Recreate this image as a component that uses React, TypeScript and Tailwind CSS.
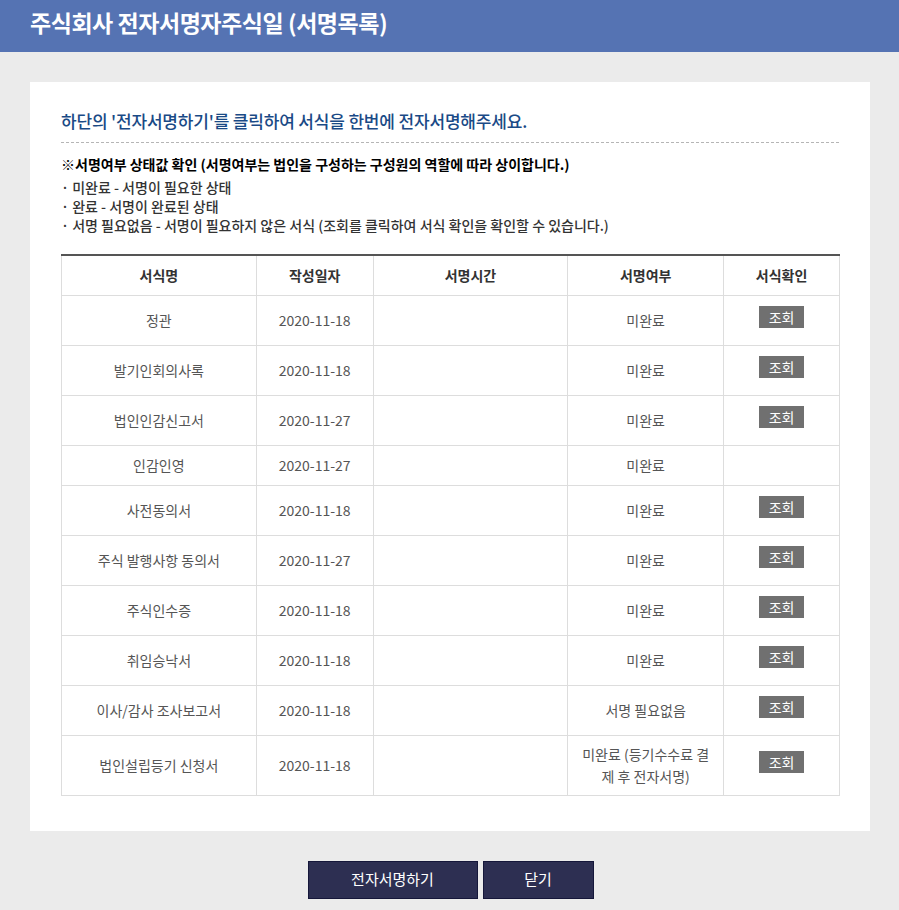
const rows = [
    { name: "정관", date: "2020-11-18", status: "미완료", view: true },
    { name: "발기인회의사록", date: "2020-11-18", status: "미완료", view: true },
    { name: "법인인감신고서", date: "2020-11-27", status: "미완료", view: true },
    { name: "인감인영", date: "2020-11-27", status: "미완료", view: false },
    { name: "사전동의서", date: "2020-11-18", status: "미완료", view: true },
    { name: "주식 발행사항 동의서", date: "2020-11-27", status: "미완료", view: true },
    { name: "주식인수증", date: "2020-11-18", status: "미완료", view: true },
    { name: "취임승낙서", date: "2020-11-18", status: "미완료", view: true },
    { name: "이사/감사 조사보고서", date: "2020-11-18", status: "서명 필요없음", view: true },
    { name: "법인설립등기 신청서", date: "2020-11-18", status: "미완료 (등기수수료 결제 후 전자서명)", view: true },
];

export default function App() {
    return (
        <div
            className="min-h-[910px] bg-[#ebebeb]"
            style={{ fontFamily: '"Noto Sans CJK KR", "Noto Sans", sans-serif' }}
        >
            <header className="h-[52px] bg-[#5573b3] pl-[30px] flex items-center">
                <h1 className="text-[23px] font-bold text-white tracking-[-0.02em] leading-none pb-[8px]">
                    주식회사 전자서명자주식일 (서명목록)
                </h1>
            </header>

            <div className="mx-[30px] mt-[30px] bg-white px-[31px] pt-[26px] pb-[35px] w-[840px]">
                <h2 className="text-[17px] font-medium text-[#1a4a86] tracking-[-0.01em] leading-[26px] pb-[8px] border-b border-dashed border-[#b5b5b5]">
                    하단의 '전자서명하기'를 클릭하여 서식을 한번에 전자서명해주세요.
                </h2>

                <p className="mt-[10px] text-[14px] font-bold text-black leading-[22px]">
                    ※서명여부 상태값 확인 (서명여부는 법인을 구성하는 구성원의 역할에 따라 상이합니다.)
                </p>
                <ul className="mt-[3px] text-[14px] text-[#333] font-medium leading-[19px]">
                    <li>· 미완료 - 서명이 필요한 상태</li>
                    <li>· 완료 - 서명이 완료된 상태</li>
                    <li>· 서명 필요없음 - 서명이 필요하지 않은 서식 (조회를 클릭하여 서식 확인을 확인할 수 있습니다.)</li>
                </ul>

                <table className="mt-[19px] w-[779px] border-collapse border-t-2 border-t-[#555] text-[14px] text-center">
                    <thead>
                        <tr className="h-[40px] text-[#333] font-bold">
                            <th className="w-[195px] border border-[#ddd] border-t-0 font-bold">서식명</th>
                            <th className="w-[117px] border border-[#ddd] border-t-0 font-bold">작성일자</th>
                            <th className="w-[195px] border border-[#ddd] border-t-0 font-bold">서명시간</th>
                            <th className="w-[156px] border border-[#ddd] border-t-0 font-bold">서명여부</th>
                            <th className="w-[116px] border border-[#ddd] border-t-0 font-bold">서식확인</th>
                        </tr>
                    </thead>
                    <tbody className="text-[#555]">
                        {rows.map((r) => (
                            <tr
                                key={r.name}
                                className={r.status.length > 10 ? "h-[60px]" : r.view ? "h-[50px]" : "h-[40px]"}
                            >
                                <td className="border border-[#ddd]">{r.name}</td>
                                <td className="border border-[#ddd]">{r.date}</td>
                                <td className="border border-[#ddd]"></td>
                                <td className="border border-[#ddd] px-[8px] leading-[22px] break-all">{r.status}</td>
                                <td className="border border-[#ddd]">
                                    {r.view && (
                                        <button className="inline-block align-middle w-[45px] h-[22px] bg-[#707070] text-white text-[14px] leading-[22px] mb-[6px]">
                                            조회
                                        </button>
                                    )}
                                </td>
                            </tr>
                        ))}
                    </tbody>
                </table>
            </div>

            <div className="flex justify-center gap-[5px] mt-[30px] pl-[2px]">
                <button className="w-[170px] h-[38px] bg-[#2d2f52] border border-[#15173a] text-white text-[15px]">
                    전자서명하기
                </button>
                <button className="w-[111px] h-[38px] bg-[#2d2f52] border border-[#15173a] text-white text-[15px]">
                    닫기
                </button>
            </div>
        </div>
    );
}
